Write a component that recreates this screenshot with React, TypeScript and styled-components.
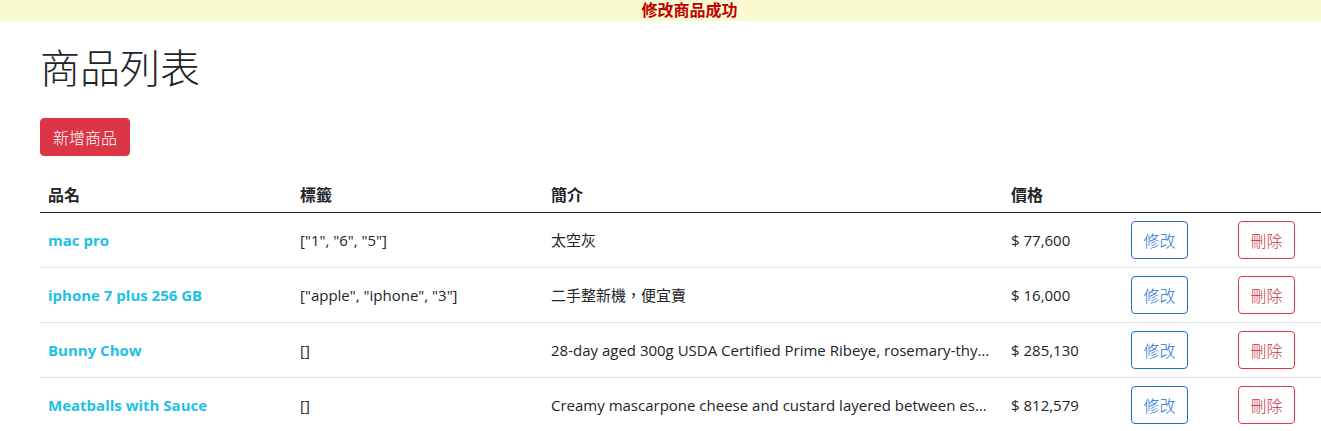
import styled, { createGlobalStyle } from "styled-components";

const GlobalStyle = createGlobalStyle`
  html, body {
    margin: 0;
    padding: 0;
    overflow: hidden;
    background: #fff;
  }
  body {
    font-family: "Open Sans", "Noto Sans CJK TC", sans-serif;
    font-size: 15px;
    line-height: 24px;
    color: #212529;
  }
`;

type Product = {
  id: number;
  name: string;
  tags: string;
  description: string;
  price: number;
};

const products: Product[] = [
  { id: 1, name: "mac pro", tags: '["1", "6", "5"]', description: "太空灰", price: 77600 },
  { id: 2, name: "iphone 7 plus 256 GB", tags: '["apple", "iphone", "3"]', description: "二手整新機，便宜賣", price: 16000 },
  {
    id: 3,
    name: "Bunny Chow",
    tags: "[]",
    description:
      "28-day aged 300g USDA Certified Prime Ribeye, rosemary-thyme garlic butter, with choice of two sides.",
    price: 285130,
  },
  {
    id: 4,
    name: "Meatballs with Sauce",
    tags: "[]",
    description:
      "Creamy mascarpone cheese and custard layered between espresso and rum soaked house-made ladyfingers, topped with Valrhona cocoa powder.",
    price: 812579,
  },
];

const Notice = styled.div`
  height: 21px;
  background: #fafad2;
  color: #c00000;
  font-family: "Liberation Serif", "Noto Sans CJK TC", serif;
  font-weight: 700;
  font-size: 16px;
  line-height: 21px;
  text-align: center;
  padding-left: 58px;
`;

const Container = styled.main`
  padding: 0 0 0 40px;
`;

const Title = styled.h1`
  margin: 21px 0 28px;
  font-family: "Noto Sans CJK TC", sans-serif;
  font-size: 40px;
  font-weight: 300;
  line-height: 48px;
`;

const Button = styled.button<{ $variant: "danger" | "outline-primary" | "outline-danger" }>`
  display: inline-block;
  box-sizing: border-box;
  padding: 6px 12px;
  border-radius: 4px;
  font-family: "Noto Sans CJK TC", sans-serif;
  font-size: 16px;
  font-weight: 300;
  line-height: 24px;
  cursor: pointer;
  border: 1px solid ${(p) => (p.$variant === "outline-primary" ? "#1c6fd4" : "#dc3545")};
  background: ${(p) => (p.$variant === "danger" ? "#dc3545" : "#fff")};
  color: ${(p) =>
    p.$variant === "danger" ? "#fff" : p.$variant === "outline-primary" ? "#1c6fd4" : "#c8303f"};
`;

const AddButton = styled(Button)`
  display: block;
  margin-bottom: 16px;
  width: 90px;
  height: 38px;
  padding: 6px 0;
`;

const Table = styled.table`
  width: 1298px;
  border-collapse: collapse;
  table-layout: fixed;
`;

const HeadCell = styled.th`
  padding: 10px 8px 6px;
  text-align: left;
  font-weight: 700;
  font-size: 16px;
  border-bottom: 1px solid #212529;
  font-family: "Noto Sans CJK TC", sans-serif;
`;

const Cell = styled.td`
  padding: 8px;
  border-top: 1px solid #dee2e6;
  vertical-align: middle;
`;

const DescCell = styled(Cell)`
  white-space: nowrap;
  overflow: hidden;
  text-overflow: ellipsis;
`;

const NameLink = styled.a`
  color: #1ec0e6;
  font-weight: 700;
  text-decoration: none;
`;

const RowButton = styled(Button)`
  width: 57px;
  height: 38px;
  padding: 6px 0;
`;

const formatPrice = (n: number) => `$ ${n.toLocaleString("en-US")}`;

const App = () => (
  <>
    <GlobalStyle />
    <Notice>修改商品成功</Notice>
    <Container>
      <Title>商品列表</Title>
      <AddButton $variant="danger">新增商品</AddButton>
      <Table>
        <colgroup>
          <col style={{ width: 252 }} />
          <col style={{ width: 251 }} />
          <col style={{ width: 460 }} />
          <col style={{ width: 120 }} />
          <col style={{ width: 107 }} />
          <col />
        </colgroup>
        <thead>
          <tr>
            <HeadCell>品名</HeadCell>
            <HeadCell>標籤</HeadCell>
            <HeadCell>簡介</HeadCell>
            <HeadCell>價格</HeadCell>
            <HeadCell />
            <HeadCell />
          </tr>
        </thead>
        <tbody>
          {products.map((p) => (
            <tr key={p.id}>
              <Cell>
                <NameLink href="#">{p.name}</NameLink>
              </Cell>
              <Cell>{p.tags}</Cell>
              <DescCell>{p.description}</DescCell>
              <Cell>{formatPrice(p.price)}</Cell>
              <Cell>
                <RowButton $variant="outline-primary">修改</RowButton>
              </Cell>
              <Cell>
                <RowButton $variant="outline-danger">刪除</RowButton>
              </Cell>
            </tr>
          ))}
        </tbody>
      </Table>
    </Container>
  </>
);

export default App;
